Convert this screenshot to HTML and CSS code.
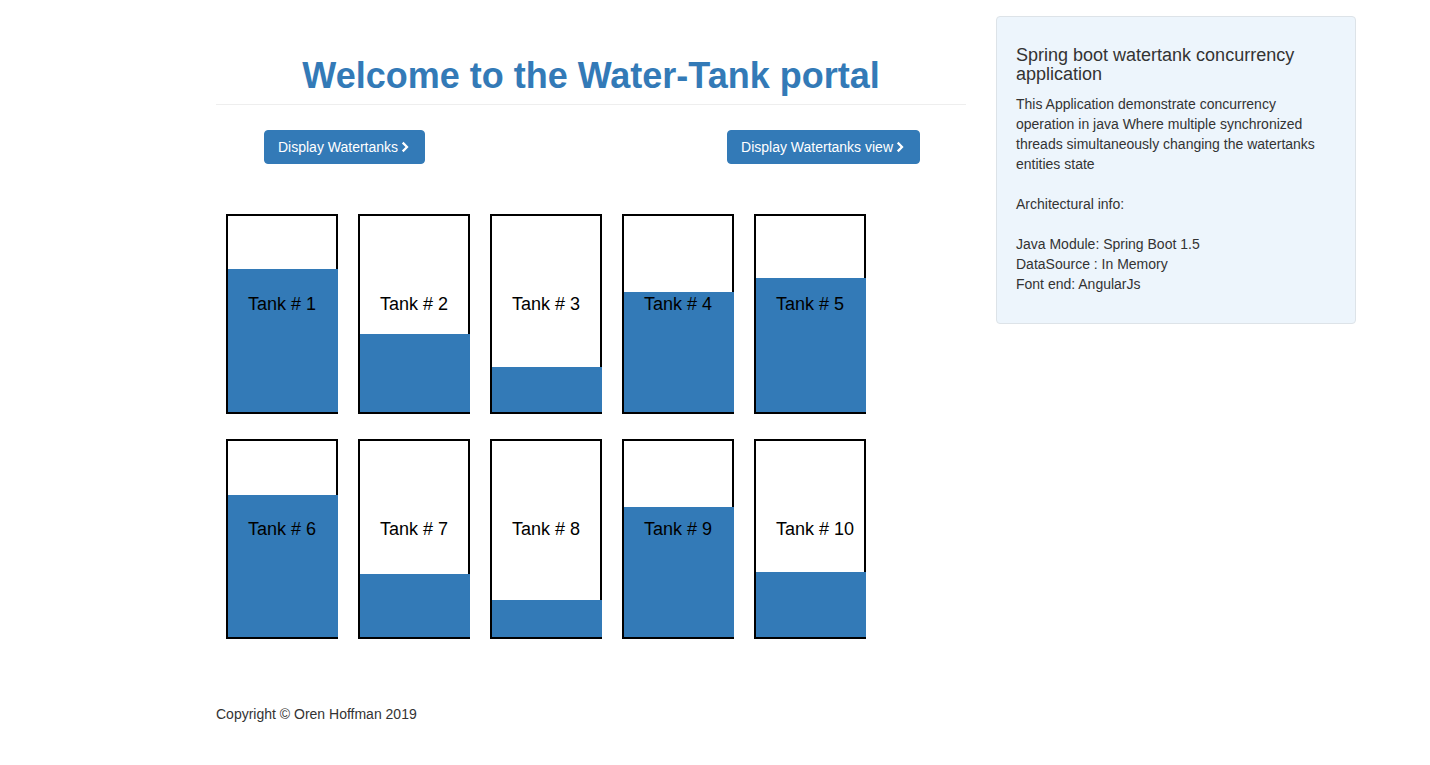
FILE: index.html
```html
<!DOCTYPE html>
<html>
<head>
<meta charset="utf-8">
<title>Water-Tank portal</title>
<link rel="stylesheet" href="styles.css">
</head>
<body>
<div class="page">
  <main class="main">
    <h1 class="title">Welcome to the Water-Tank portal</h1>
    <hr class="rule">
    <div class="actions">
      <a class="btn" href="#">Display Watertanks <svg class="chev" viewBox="0 0 10 12" width="10" height="12"><path d="M2.5 0.8 L7.6 6 L2.5 11.2 L0.9 9.6 L4.5 6 L0.9 2.4 Z" fill="#fff"/></svg></a>
      <a class="btn" href="#">Display Watertanks view <svg class="chev" viewBox="0 0 10 12" width="10" height="12"><path d="M2.5 0.8 L7.6 6 L2.5 11.2 L0.9 9.6 L4.5 6 L0.9 2.4 Z" fill="#fff"/></svg></a>
    </div>
    <div class="tanks">
      <div class="tank"><div class="water" style="height:143px"></div><span class="label">Tank # 1</span></div>
      <div class="tank"><div class="water" style="height:78px"></div><span class="label">Tank # 2</span></div>
      <div class="tank"><div class="water" style="height:45px"></div><span class="label">Tank # 3</span></div>
      <div class="tank"><div class="water" style="height:120px"></div><span class="label">Tank # 4</span></div>
      <div class="tank"><div class="water" style="height:134px"></div><span class="label">Tank # 5</span></div>
      <div class="tank"><div class="water" style="height:142px"></div><span class="label">Tank # 6</span></div>
      <div class="tank"><div class="water" style="height:63px"></div><span class="label">Tank # 7</span></div>
      <div class="tank"><div class="water" style="height:37px"></div><span class="label">Tank # 8</span></div>
      <div class="tank"><div class="water" style="height:130px"></div><span class="label">Tank # 9</span></div>
      <div class="tank"><div class="water" style="height:65px"></div><span class="label">Tank # 10</span></div>
    </div>
    <footer class="footer">Copyright © Oren Hoffman 2019</footer>
  </main>
  <aside class="info">
    <h4 class="info-title">Spring boot watertank concurrency application</h4>
    <p class="info-text">This Application demonstrate concurrency operation in java Where multiple synchronized threads simultaneously changing the watertanks entities state</p>
    <p class="info-text">Architectural info:</p>
    <p class="info-text">Java Module: Spring Boot 1.5<br>DataSource : In Memory<br>Font end: AngularJs</p>
  </aside>
</div>
</body>
</html>
```
FILE: styles.css
```css
* { box-sizing: border-box; }
html, body { margin: 0; padding: 0; background: #fff; }
body {
  font-family: "Liberation Sans", Arial, sans-serif;
  font-size: 14px;
  line-height: 20px;
  color: #333;
}
.page {
  display: flex;
  gap: 30px;
  padding-left: 216px;
  padding-top: 16px;
}
.main {
  width: 750px;
  display: flex;
  flex-direction: column;
}
.title {
  margin: 40px 0 0;
  font-size: 36px;
  line-height: 40px;
  font-weight: bold;
  color: #337ab7;
  text-align: center;
}
.rule {
  margin: 8px 0 0;
  border: 0;
  border-top: 1px solid #eee;
  height: 0;
}
.actions {
  display: flex;
  justify-content: space-between;
  padding: 0 46px 0 48px;
  margin-top: 25px;
}
.btn {
  display: inline-flex;
  align-items: center;
  gap: 3px;
  height: 34px;
  padding: 0 13px;
  background: #337ab7;
  border: 1px solid #337ab7;
  border-radius: 4px;
  color: #fff;
  font-size: 14px;
  text-decoration: none;
}
.chev { display: block; margin-top: -1px; }
.tanks {
  display: flex;
  flex-wrap: wrap;
  width: 660px;
  margin-top: 50px;
  padding-left: 10px;
  column-gap: 20px;
  row-gap: 25px;
}
.tank {
  position: relative;
  width: 112px;
  height: 200px;
  border: 2px solid #000;
}
.water {
  position: absolute;
  left: 0;
  right: -2px;
  bottom: 0;
  background: #337ab7;
}
.label {
  position: relative;
  display: block;
  padding-left: 20px;
  margin-top: 77px;
  font-size: 18px;
  line-height: 22px;
  color: #000;
}
.footer {
  margin-top: 65px;
  font-size: 14px;
  line-height: 20px;
}
.info {
  width: 360px;
  height: 308px;
  background: #edf5fc;
  border: 1px solid #dde3e8;
  border-radius: 4px;
  padding: 29px 19px 0;
}
.info-title {
  margin: 0 0 10px;
  font-size: 18px;
  font-weight: normal;
  line-height: 19px;
  color: #333;
}
.info-text {
  margin: 0 0 20px;
  font-size: 14px;
  line-height: 20px;
}
```
